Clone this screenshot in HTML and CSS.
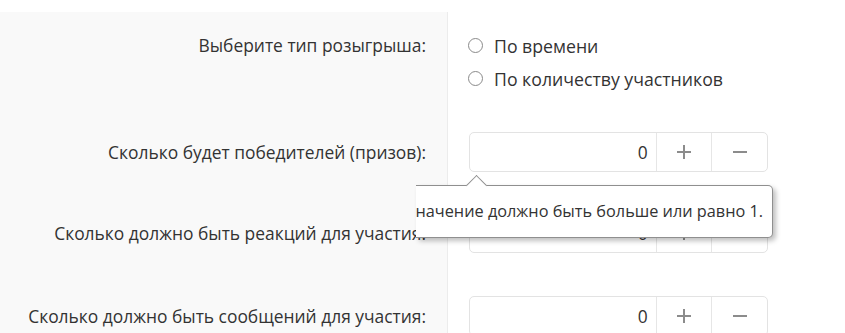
FILE: index.html
```html
<!DOCTYPE html>
<html lang="ru">
<head>
<meta charset="utf-8">
<link rel="stylesheet" href="styles.css">
</head>
<body>
<div class="page">
  <form class="form">
    <div class="row row-type">
      <div class="label">Выберите тип розыгрыша:</div>
      <div class="control">
        <label class="radio"><span class="dot"></span>По времени</label>
        <label class="radio"><span class="dot"></span>По количеству участников</label>
      </div>
    </div>
    <div class="row row-winners">
      <div class="label">Сколько будет победителей (призов):</div>
      <div class="control">
        <div class="spin">
          <div class="value">0</div>
          <div class="btn"><svg width="16" height="16" viewBox="0 0 16 16"><path d="M8 1v14M1 8h14" stroke="#8c8c8c" stroke-width="2" fill="none"/></svg></div>
          <div class="btn"><svg width="16" height="16" viewBox="0 0 16 16"><path d="M1 8h14" stroke="#8c8c8c" stroke-width="2" fill="none"/></svg></div>
        </div>
      </div>
    </div>
    <div class="row row-reactions">
      <div class="label">Сколько должно быть реакций для участия:</div>
      <div class="control">
        <div class="spin">
          <div class="value">0</div>
          <div class="btn"><svg width="16" height="16" viewBox="0 0 16 16"><path d="M8 1v14M1 8h14" stroke="#8c8c8c" stroke-width="2" fill="none"/></svg></div>
          <div class="btn"><svg width="16" height="16" viewBox="0 0 16 16"><path d="M1 8h14" stroke="#8c8c8c" stroke-width="2" fill="none"/></svg></div>
        </div>
      </div>
    </div>
    <div class="row row-messages">
      <div class="label">Сколько должно быть сообщений для участия:</div>
      <div class="control">
        <div class="spin">
          <div class="value">0</div>
          <div class="btn"><svg width="16" height="16" viewBox="0 0 16 16"><path d="M8 1v14M1 8h14" stroke="#8c8c8c" stroke-width="2" fill="none"/></svg></div>
          <div class="btn"><svg width="16" height="16" viewBox="0 0 16 16"><path d="M1 8h14" stroke="#8c8c8c" stroke-width="2" fill="none"/></svg></div>
        </div>
      </div>
    </div>
  </form>
  <div class="tooltip">
    <div class="tip-arrow"></div>
    <div class="tip-body"><span class="tip-text">Значение должно быть больше или равно 1.</span></div>
  </div>
</div>
</body>
</html>
```

FILE: styles.css
```css
html, body {
  margin: 0;
  padding: 0;
  background: #ffffff;
  overflow: hidden;
}
body {
  font-family: "Open Sans", "Noto Sans", sans-serif;
  font-size: 17.4px;
  color: #333333;
}
.page {
  position: relative;
  padding-top: 12px;
  height: 321px;
  overflow: hidden;
}
.form {
  display: block;
}
.row {
  display: grid;
  grid-template-columns: 448px 1fr;
}
.label {
  background: #f9f9f9;
  border-right: 1px solid #ececec;
  text-align: right;
  padding-right: 21px;
  white-space: nowrap;
}
.control {
  padding-left: 21px;
}
.row-type .label,
.row-type .control { padding-top: 17px; }
.row-type .label { line-height: 33px; }
.row-winners .label,
.row-winners .control { padding-top: 37px; }
.row-reactions .label,
.row-reactions .control { padding-top: 41px; }
.row-messages .label,
.row-messages .control { padding-top: 43px; padding-bottom: 20px; }
.row-winners .label,
.row-reactions .label,
.row-messages .label { line-height: 40px; }

.radio {
  display: flex;
  align-items: center;
  height: 33px;
  gap: 11px;
  font-size: 17.7px;
}
.dot {
  width: 13px;
  height: 13px;
  border: 1.6px solid #8a8a8a;
  border-radius: 50%;
  background: #fff;
  margin-left: -1px;
}
.spin {
  display: flex;
  width: 297px;
  height: 38px;
  border: 1px solid #e3e3e3;
  border-radius: 5px;
  background: #fff;
}
.value {
  width: 179px;
  padding-right: 8px;
  text-align: right;
  line-height: 38px;
  border-right: 1px solid #e6e6e6;
}
.btn {
  width: 55px;
  display: flex;
  align-items: center;
  justify-content: center;
}
.btn + .btn {
  border-left: 1px solid #e6e6e6;
}
.btn svg {
  display: block;
}

.tooltip {
  position: absolute;
  left: 416px;
  top: 174px;
  width: 357px;
}
.tip-arrow {
  position: absolute;
  left: 53px;
  top: 4px;
  width: 14px;
  height: 14px;
  background: #fff;
  border-left: 1px solid #8f8f8f;
  border-top: 1px solid #8f8f8f;
  transform: rotate(45deg);
  z-index: 2;
}
.tip-body {
  position: relative;
  margin-top: 11px;
  height: 51px;
  background: #fff;
  border-top: 1px solid #8f8f8f;
  border-right: 1px solid #8f8f8f;
  border-bottom: 1px solid #8f8f8f;
  border-radius: 0 5px 5px 0;
  box-shadow: 3px 3px 5px rgba(0, 0, 0, 0.25);
  overflow: hidden;
  line-height: 51px;
  white-space: nowrap;
  font-size: 16.3px;
  z-index: 1;
}
.tip-text {
  display: inline-block;
  margin-left: -10px;
}
```
